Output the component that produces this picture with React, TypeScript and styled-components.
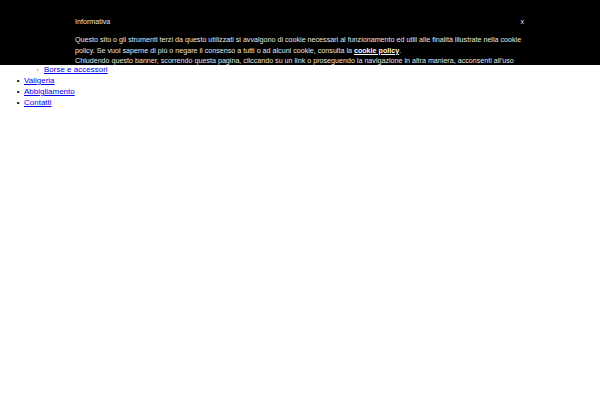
import React from 'react';
import styled, { createGlobalStyle } from 'styled-components';

const GlobalStyle = createGlobalStyle`
	body {
		margin: 8px;
		background: #fff;
		font-family: "Liberation Sans", Arial, sans-serif;
	}
`;

const Menu = styled.ul`
	margin: 14px 0 4px;
	padding-left: 16px;
	font-size: 8px;
	line-height: 10.8px;
	list-style: disc;

	> li::marker {
		content: '\\2022\\00a0\\00a0';
	}
`;

const SubMenu = styled.ul`
	margin: 0;
	padding-left: 20px;
	list-style: circle;

	> li::marker {
		content: '\\25E6\\00a0\\00a0';
		font-family: "DejaVu Sans", sans-serif;
		font-size: 7px;
	}
`;

const MenuLink = styled.a`
	color: #0000ee;
	text-decoration: underline;
`;

const Banner = styled.div`
	position: fixed;
	top: 0;
	left: 0;
	right: 0;
	height: 65px;
	overflow: hidden;
	background: #000;
	color: #e6e6e6;
	font-family: "Liberation Sans", Arial, sans-serif;
	font-size: 7.15px;
	line-height: 10.4px;
`;

const BannerInner = styled.div`
	width: 450px;
	margin: 0 auto;
	padding-top: 17px;
`;

const BannerHead = styled.div`
	display: flex;
	justify-content: space-between;
	align-items: center;
`;

const CloseButton = styled.button`
	border: none;
	background: none;
	color: #e6e6e6;
	padding: 0 1px 0 0;
	font: inherit;
	cursor: pointer;
`;

const BannerText = styled.p`
	margin: 8px 0 0;
`;

const PolicyLink = styled.a`
	color: #fff;
	font-weight: bold;
	text-decoration: underline;
`;

const items = [
	{ label: 'Home' },
	{ label: 'Azienda' },
	{ label: 'Prodotti', children: ['Pelletteria', 'Borse e accessori'] },
	{ label: 'Valigeria' },
	{ label: 'Abbigliamento' },
	{ label: 'Contatti' },
];

const App = () => (
	<>
		<GlobalStyle />
		<nav>
			<Menu>
				{items.map((item) => (
					<li key={item.label}>
						<MenuLink href='#'>{item.label}</MenuLink>
						{item.children && (
							<SubMenu>
								{item.children.map((child) => (
									<li key={child}>
										<MenuLink href='#'>{child}</MenuLink>
									</li>
								))}
							</SubMenu>
						)}
					</li>
				))}
			</Menu>
		</nav>
		<Banner>
			<BannerInner>
				<BannerHead>
					<span>Informativa</span>
					<CloseButton>x</CloseButton>
				</BannerHead>
				<BannerText>
					Questo sito o gli strumenti terzi da questo utilizzati si avvalgono di cookie necessari al
					funzionamento ed utili alle finalità illustrate nella cookie policy. Se vuoi saperne di più o
					negare il consenso a tutti o ad alcuni cookie, consulta la <PolicyLink href='#'>cookie policy</PolicyLink>.
					<br />
					Chiudendo questo banner, scorrendo questa pagina, cliccando su un link o proseguendo la
					navigazione in altra maniera, acconsenti all'uso dei cookie.
				</BannerText>
			</BannerInner>
		</Banner>
	</>
);

export default App;
